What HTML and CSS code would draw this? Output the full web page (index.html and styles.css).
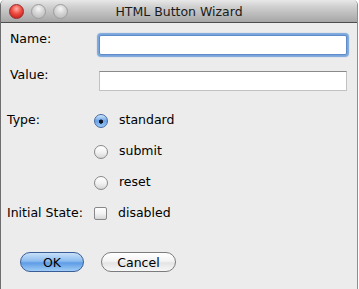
FILE: index.html
```html
<!DOCTYPE html>
<html lang="en">
<head>
  <meta charset="UTF-8">
  <title>HTML Button Wizard</title>
  <link rel="stylesheet" href="styles.css">
</head>
<body>
  <div class="window">
    <!-- Title bar -->
    <div class="titlebar">
      <div class="lights">
        <span class="light close"></span>
        <span class="light"></span>
        <span class="light"></span>
      </div>
      <div class="title">HTML Button Wizard</div>
      <div></div>
    </div>

    <div class="content">
      <!-- Text fields -->
      <div class="fields">
        <div class="field-row">
          <label class="field-label" for="name">Name:</label>
          <input class="text-input focused" type="text" id="name">
        </div>
        <div class="field-row">
          <label class="field-label" for="value">Value:</label>
          <input class="text-input" type="text" id="value">
        </div>
      </div>

      <!-- Options -->
      <div class="options">
        <div class="option-row">
          <span class="option-label">Type:</span>
          <span class="radio checked"></span>
          <span class="option-text">standard</span>
        </div>
        <div class="option-row">
          <span class="option-label"></span>
          <span class="radio"></span>
          <span class="option-text">submit</span>
        </div>
        <div class="option-row">
          <span class="option-label"></span>
          <span class="radio"></span>
          <span class="option-text">reset</span>
        </div>
        <div class="option-row">
          <span class="option-label">Initial State:</span>
          <span class="checkbox"></span>
          <span class="option-text">disabled</span>
        </div>
      </div>

      <!-- Buttons -->
      <div class="actions">
        <button class="aqua-button default">OK</button>
        <button class="aqua-button cancel">Cancel</button>
      </div>
    </div>
  </div>
</body>
</html>
```

FILE: styles.css
```css
/* Mac OS X dialog look */
:root {
  --window-bg: #ececec;
  --text: #000000;
  --focus: #78a6dc;
}

body {
  margin: 0;
  background: #ffffff;
  font-family: 'DejaVu Sans', 'Liberation Sans', sans-serif;
  font-size: 12.5px;
  color: var(--text);
}

.window {
  width: 358px;
  height: 289px;
  box-sizing: border-box;
  background: var(--window-bg);
  border-left: 1px solid #6e6e6e;
  border-right: 1px solid #8e8e8e;
  border-radius: 5px 5px 0 0;
  overflow: hidden;
}

/* Title bar */
.titlebar {
  height: 22px;
  display: grid;
  grid-template-columns: 1fr auto 1fr;
  align-items: center;
  background: linear-gradient(to bottom, #e8e8e8 0%, #d0d0d0 30%, #a6a6a6 100%);
  border-bottom: 1px solid #4d4d4d;
}

.lights {
  display: flex;
  gap: 7px;
  padding-left: 8px;
}

.light {
  width: 13px;
  height: 13px;
  border-radius: 50%;
  border: 1px solid #9c9c9c;
  background: radial-gradient(circle at 50% 30%, #f6f6f6 0%, #d4d4d4 45%, #b4b4b4 100%);
}

.light.close {
  border-color: #9a2a2a;
  background: radial-gradient(circle at 50% 30%, #ffb0a8 0%, #ee4a40 45%, #b51812 100%);
}

.title {
  color: #1a1a1a;
  padding-top: 1px;
}

/* Content */
.content {
  padding-top: 8px;
}

.fields {
  display: flex;
  flex-direction: column;
  gap: 12px;
  padding-left: 9px;
}

.field-row {
  display: flex;
  align-items: flex-start;
}

.field-label {
  width: 89px;
  line-height: 15px;
}

.text-input {
  margin: 4px 0 0;
  width: 248px;
  height: 20px;
  box-sizing: border-box;
  padding: 0 3px;
  border: 1px solid #c2c2c2;
  border-top-color: #8a8a8a;
  background: #ffffff;
  font: inherit;
  outline: none;
}

.text-input.focused {
  border-color: #5f8cc8;
  box-shadow: 0 0 1px 2px var(--focus);
  border-radius: 2px;
}

/* Radio / checkbox options */
.options {
  display: flex;
  flex-direction: column;
  gap: 16px;
  margin-top: 21px;
  padding-left: 6px;
}

.option-row {
  display: flex;
  align-items: flex-start;
  height: 15px;
  line-height: 15px;
}

.option-label {
  width: 87px;
}

.radio,
.checkbox {
  width: 14px;
  height: 14px;
  margin-top: 2px;
  box-sizing: border-box;
  border: 1px solid #888888;
  background: linear-gradient(to bottom, #ffffff 0%, #f3f3f3 50%, #d6d6d6 100%);
  flex-shrink: 0;
}

.radio {
  border-radius: 50%;
}

.radio.checked {
  border-color: #4369a5;
  background: radial-gradient(circle at 50% 55%, #0d1526 0, #0d1526 1.8px, transparent 2.4px),
              linear-gradient(to bottom, #d3e6fb 0%, #6aa2e6 50%, #9ccaf5 100%);
}

.checkbox {
  width: 13px;
  height: 13px;
  border-radius: 2px;
}

.option-text {
  margin-left: 11px;
}

/* Buttons */
.actions {
  display: flex;
  gap: 17px;
  margin-top: 32px;
  padding-left: 19px;
}

.aqua-button {
  height: 20px;
  padding: 0;
  border-radius: 10px;
  font: inherit;
  line-height: 17px;
  color: #000;
  cursor: pointer;
}

.aqua-button.default {
  width: 64px;
  border: 1px solid #3a5d97;
  background: linear-gradient(to bottom, #c9e0f8 0%, #8cbcef 45%, #5f9ce6 55%, #9fcdf6 100%);
}

.aqua-button.cancel {
  width: 75px;
  border: 1px solid #7c7c7c;
  background: linear-gradient(to bottom, #ffffff 0%, #f4f4f4 45%, #e4e4e4 55%, #f7f7f7 100%);
}
```
